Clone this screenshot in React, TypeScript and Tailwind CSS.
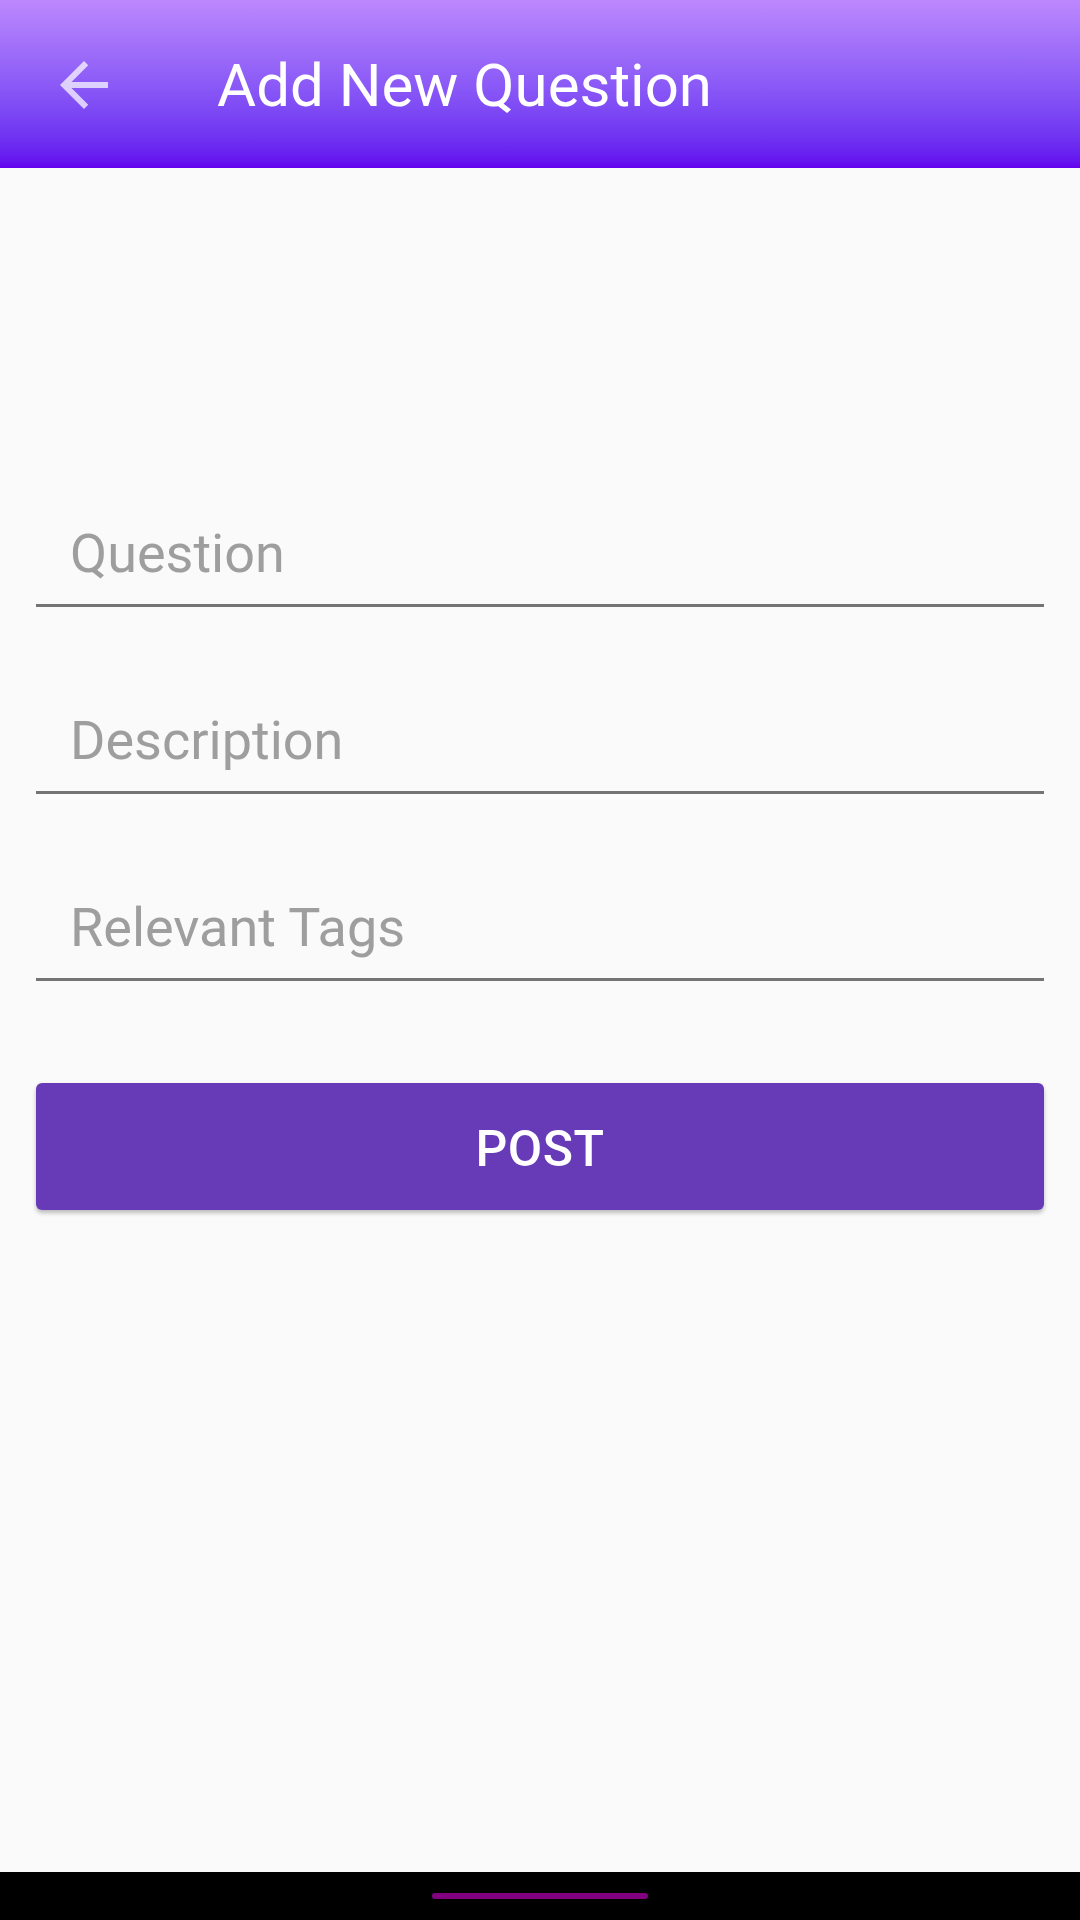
// App.tsx
import React from "react";

const font = { fontFamily: "Roboto, 'Noto Sans', sans-serif" };

function BackArrow() {
  // material "arrow_back" glyph, 24dp box drawn at 3x
  return (
    <svg viewBox="0 0 24 24" className="w-[72px] h-[72px]" fill="rgba(255,255,255,0.72)">
      <path d="M20 11H7.83l5.59-5.59L12 4l-8 8 8 8 1.41-1.41L7.83 13H20v-2z" />
    </svg>
  );
}

function Field({ hint, first }: { hint: string; first?: boolean }) {
  return (
    <div className={`${first ? "" : "mt-[102px]"} border-b-[3px] border-[#747474] pl-[34px] pb-[19px]`}>
      <input
        placeholder={hint}
        className="w-full bg-transparent outline-none text-[54px] leading-[63px] text-[#212121] placeholder:text-[#9e9e9e]"
        style={font}
      />
    </div>
  );
}

export default function App() {
  return (
    <div className="flex flex-col h-[1920px] w-[1080px] bg-[#fafafa]" style={font}>
      <header className="h-[168px] shrink-0 flex items-center bg-gradient-to-b from-[#bd88fd] to-[#6200ee]">
        <div className="ml-[48px] pt-[2px]">
          <BackArrow />
        </div>
        <h1 className="ml-[97px] pt-[4px] text-[60px] leading-[70px] text-white font-normal">Add New Question</h1>
      </header>

      <main className="flex-1 px-[36px] pt-[354px]">
        <Field hint="Question" first />
        <Field hint="Description" />
        <Field hint="Relevant Tags" />

        <button className="mt-[102px] w-full h-[127px] pt-[5px] rounded-[6px] bg-[#673ab7] text-white text-[50px] font-medium tracking-[0.5px] shadow-[0_3px_4px_rgba(0,0,0,0.25)]">
          POST
        </button>
      </main>

      <div className="h-[48px] shrink-0 bg-black flex items-center justify-center">
        <div className="w-[216px] h-[6px] rounded-full bg-[#800080]" />
      </div>
    </div>
  );
}
